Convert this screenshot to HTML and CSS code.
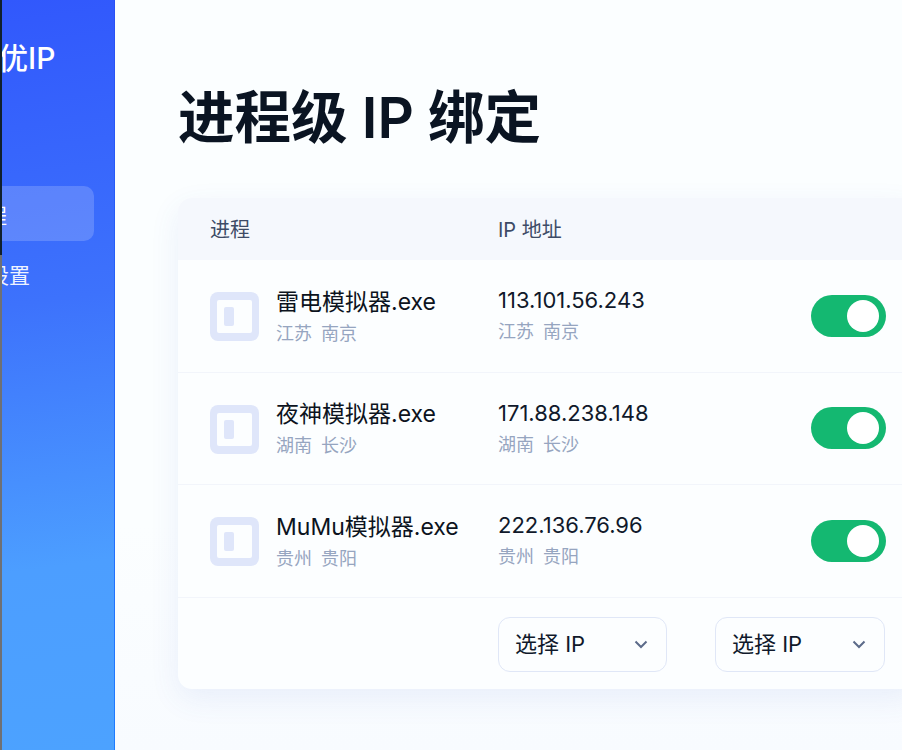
FILE: index.html
```html
<!DOCTYPE html>
<html lang="zh-CN">
  <head>
    <meta charset="UTF-8" />
    <meta name="viewport" content="width=device-width, initial-scale=1.0" />
    <title>进程级 IP 绑定</title>
    <link rel="stylesheet" href="styles.css">
  </head>
  <body>
    <div class="edge"></div>
    <aside class="sidebar">
      <div class="brand">畅优IP</div>
      <nav class="menu">
        <a class="menu-item active">进程</a>
        <a class="menu-item">系统设置</a>
      </nav>
    </aside>

    <main class="content">
      <h1>进程级 IP 绑定</h1>

      <section class="card">
        <div class="row head">
          <div>进程</div>
          <div>IP 地址</div>
        </div>

        <div class="row">
          <div class="process">
            <span class="app-icon"><i></i></span>
            <div>
              <div class="name">雷电模拟器.exe</div>
              <div class="place">江苏 南京</div>
            </div>
          </div>
          <div>
            <div class="ip">113.101.56.243</div>
            <div class="place">江苏 南京</div>
          </div>
          <span class="toggle"><i></i></span>
        </div>

        <div class="row">
          <div class="process">
            <span class="app-icon"><i></i></span>
            <div>
              <div class="name">夜神模拟器.exe</div>
              <div class="place">湖南 长沙</div>
            </div>
          </div>
          <div>
            <div class="ip">171.88.238.148</div>
            <div class="place">湖南 长沙</div>
          </div>
          <span class="toggle"><i></i></span>
        </div>

        <div class="row">
          <div class="process">
            <span class="app-icon"><i></i></span>
            <div>
              <div class="name">MuMu模拟器.exe</div>
              <div class="place">贵州 贵阳</div>
            </div>
          </div>
          <div>
            <div class="ip">222.136.76.96</div>
            <div class="place">贵州 贵阳</div>
          </div>
          <span class="toggle"><i></i></span>
        </div>

        <div class="footer">
          <div class="select">
            <span>选择 IP</span>
            <svg width="14" height="9" viewBox="0 0 14 9"><path d="M1.5 1.5 7 7l5.500-5.500" /></svg>
          </div>
          <div class="select select-wide">
            <span>选择 IP</span>
            <svg width="14" height="9" viewBox="0 0 14 9"><path d="M1.5 1.5 7 7l5.500-5.500" /></svg>
          </div>
        </div>
      </section>
    </main>
  </body>
</html>
```

FILE: styles.css
```css
* {
  box-sizing: border-box;
}
html,
body {
  height: 100%;
}
body {
  margin: 0;
  display: flex;
  overflow: hidden;
  background: linear-gradient(#fbfeff 70%, #f8fbff);
  color: #10192b;
  font-family: Inter, "Noto Sans CJK SC", sans-serif;
}
.edge {
  width: 2px;
  flex: none;
  background: linear-gradient(#10202c 0, #10202c 255px, #6f7074 255px);
}
.sidebar {
  width: 113px;
  flex: none;
  overflow: hidden;
  background: linear-gradient(172deg, #3158fc 0%, #3d72fc 40%, #4c9eff 75%, #4ca2ff 100%);
  border-right: 1px solid #2a50f5;
  border-image: linear-gradient(#2a50f5, #1e7cff) 1;
  color: #fff;
}
.brand {
  margin-left: -34px;
  padding-top: 38px;
  font-size: 30px;
  font-weight: 500;
  line-height: 40px;
  white-space: nowrap;
}
.menu {
  margin-left: -63px;
  margin-top: 108px;
  display: flex;
  flex-direction: column;
  gap: 5px;
}
.menu-item {
  width: 155px;
  height: 55px;
  padding-left: 7px;
  display: flex;
  align-items: center;
  border-radius: 10px;
  font-size: 21px;
  white-space: nowrap;
  color: #eef3ff;
}
.active {
  padding-left: 26px;
  background: rgba(255, 255, 255, 0.18);
  color: #fff;
}
.content {
  flex: none;
  width: 787px;
  padding: 0 0 0 63px;
}
h1 {
  margin: 83px 0 45px;
  color: #0a1422;
  font-size: 56.500px;
  font-weight: 600;
  line-height: 70px;
  white-space: nowrap;
}
.card {
  width: 740px;
  height: 491px;
  border-radius: 14px;
  background: #fcfeff;
  box-shadow: 0 10px 30px rgba(70, 100, 200, 0.09);
  overflow: hidden;
}
.row {
  height: 112.500px;
  padding: 0 32px;
  display: grid;
  grid-template-columns: 288px 1fr auto;
  align-items: center;
  border-bottom: 1px solid #f2f5fb;
}
.head {
  height: 62px;
  padding-bottom: 2px;
  background: #f5f8fd;
  border-bottom: 0;
  color: #3d4b66;
  font-size: 20px;
}
.process {
  display: flex;
  align-items: center;
  gap: 17px;
}
.app-icon {
  width: 49px;
  height: 49px;
  margin-top: 2px;
  padding: 8px 7px;
  border-radius: 8px;
  background: #dfe6fa;
}
.app-icon i {
  display: block;
  width: 100%;
  height: 100%;
  padding: 7px;
  background: #fcfeff;
  border-radius: 2px;
}
.app-icon i::before {
  content: "";
  display: block;
  width: 10px;
  height: 19px;
  background: #dfe6fa;
  border-radius: 2px;
}
.name,
.ip {
  font-size: 22px;
  line-height: 30px;
}
.name {
  margin-top: 2px;
  font-size: 23px;
  color: #0c1320;
}
.ip {
  margin-top: -1px;
}
.place {
  margin-top: 4px;
  color: #96a5c0;
  font-size: 18px;
  line-height: 26px;
  word-spacing: 4px;
}
.toggle {
  width: 75px;
  height: 42px;
  padding: 5px 7px;
  display: flex;
  justify-content: flex-end;
  border-radius: 21px;
  background: #14b871;
}
.toggle i {
  width: 32px;
  height: 32px;
  border-radius: 50%;
  background: #fff;
}
.footer {
  padding: 19px 0 0 320px;
  display: flex;
  gap: 48px;
}
.select {
  width: 169px;
  height: 55px;
  padding: 0 18px 0 16px;
  display: flex;
  align-items: center;
  justify-content: space-between;
  border: 1px solid #e0e7f7;
  border-radius: 12px;
  font-size: 22px;
}
.select span {
  padding-bottom: 4px;
}
.select-wide {
  width: 170px;
}
.select svg {
  fill: none;
  stroke: #5c6b8a;
  stroke-width: 2;
}
```
